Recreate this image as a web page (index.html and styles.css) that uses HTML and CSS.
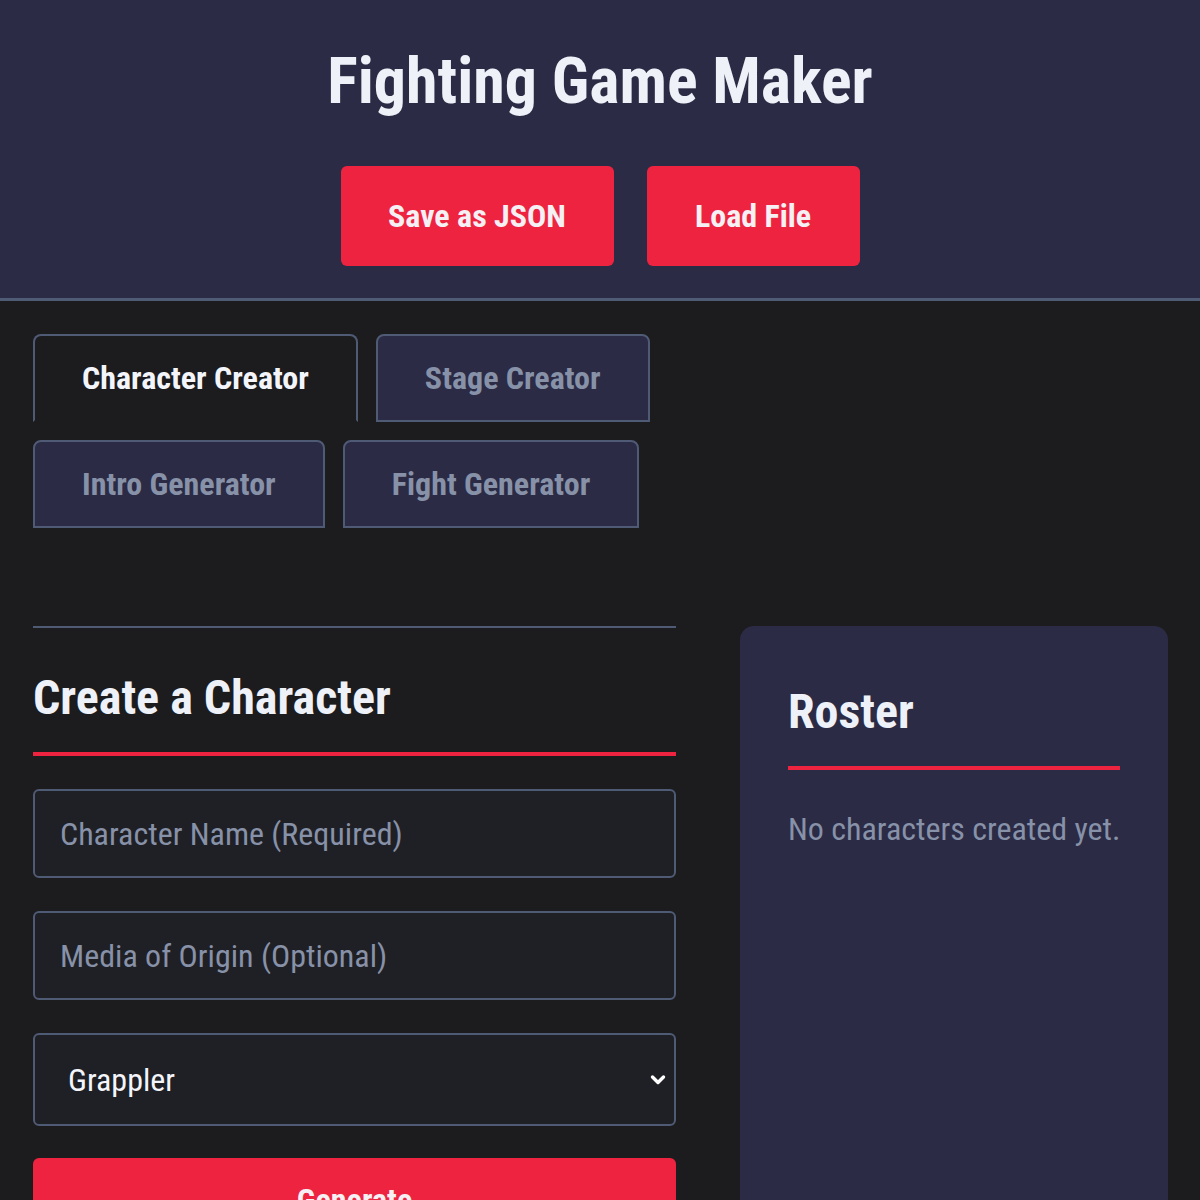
FILE: index.html
```html
<!DOCTYPE html>
<html lang="en">
<head>
    <meta charset="UTF-8">
    <meta name="viewport" content="width=device-width, initial-scale=1.0">
    <title>Fighting Game Maker</title>
    <link rel="stylesheet" href="styles.css">
</head>
<body>
    <header>
        <h1>Fighting Game Maker</h1>
        <div class="header-actions">
            <button class="btn">Save as JSON</button>
            <button class="btn btn-narrow">Load File</button>
        </div>
    </header>
    <main>
        <nav class="tabs">
            <button class="tab active">Character Creator</button>
            <button class="tab">Stage Creator</button>
            <button class="tab">Intro Generator</button>
            <button class="tab">Fight Generator</button>
        </nav>
        <div class="layout">
            <section class="creator">
                <h2>Create a Character</h2>
                <input type="text" class="field" placeholder="Character Name (Required)">
                <input type="text" class="field" placeholder="Media of Origin (Optional)">
                <div class="select-wrap">
                    <select class="field select">
                        <option>Grappler</option>
                        <option>Rushdown</option>
                        <option>Zoner</option>
                        <option>All-Rounder</option>
                    </select>
                    <svg class="chevron" viewBox="0 0 18 18" width="18" height="18">
                        <path d="M3.5 6 L9 11.5 L14.5 6" fill="none" stroke="#fff" stroke-width="3.4" stroke-linecap="round" stroke-linejoin="round"/>
                    </svg>
                </div>
                <button class="btn btn-block">Generate</button>
            </section>
            <aside class="roster">
                <h2>Roster</h2>
                <p class="empty">No characters created yet.</p>
            </aside>
        </div>
    </main>
</body>
</html>
```

FILE: styles.css
```css
body {
    font-family: 'Roboto Condensed', Roboto, sans-serif;
    font-stretch: 75%;
    margin: 0;
    padding: 0;
    background: #1c1c1f;
    color: #eef1f7;
}

header {
    background: #2b2b45;
    border-bottom: 3px solid #4f5b75;
    text-align: center;
    padding: 46px 0 32px;
}

header h1 {
    margin: 0;
    font-size: 64px;
    font-weight: 700;
    line-height: 72px;
}

.header-actions {
    display: flex;
    justify-content: center;
    gap: 33px;
    margin-top: 48px;
}

.btn {
    font-family: inherit;
    font-stretch: 75%;
    background: #ee2340;
    color: #f5f0f3;
    border: none;
    border-radius: 6px;
    font-size: 32px;
    font-weight: 700;
    width: 273px;
    height: 100px;
    cursor: pointer;
}

.btn-narrow {
    width: 213px;
}

main {
    padding: 33px 32px 0 33px;
}

.tabs {
    display: flex;
    flex-wrap: wrap;
    gap: 18px;
    width: 643px;
}

.tab {
    font-family: inherit;
    font-stretch: 75%;
    font-size: 32px;
    font-weight: 700;
    height: 88px;
    padding: 0 47px;
    background: #2b2b45;
    color: #8791a8;
    border: 2px solid #4f5b75;
    border-radius: 8px 8px 0 0;
    cursor: pointer;
}

.tab.active {
    background: #1c1c1f;
    color: #f3f5fa;
    border-bottom-color: transparent;
}

.layout {
    display: grid;
    grid-template-columns: 643px 428px;
    gap: 64px;
    margin-top: 98px;
}

.creator {
    border-top: 2px solid #4f5b75;
    padding-top: 40px;
}

.creator h2,
.roster h2 {
    margin: 0 0 33px;
    font-size: 48px;
    font-weight: 700;
    line-height: 60px;
    padding-bottom: 24px;
    border-bottom: 4px solid #ee2340;
}

.field {
    display: block;
    box-sizing: border-box;
    width: 100%;
    height: 89px;
    margin-top: 33px;
    padding: 0 25px;
    background: #1f2025;
    border: 2px solid #4f5b75;
    border-radius: 6px;
    color: #f3f5fa;
    font-family: inherit;
    font-stretch: 75%;
    font-size: 32px;
}

.creator h2 + .field {
    margin-top: 0;
}

.field::placeholder {
    color: #8791a8;
}

.select-wrap {
    position: relative;
}

.select {
    appearance: none;
    height: 93px;
    padding: 0 33px;
}

.chevron {
    position: absolute;
    right: 9px;
    top: 50%;
    transform: translateY(-50%);
    pointer-events: none;
}

.btn-block {
    width: 100%;
    margin-top: 32px;
    height: 84px;
}

.roster {
    background: #2b2b45;
    border-radius: 14px;
    padding: 56px 48px 400px;
}

.roster h2 {
    margin-bottom: 40px;
}

.empty {
    margin: 0;
    font-size: 32px;
    white-space: nowrap;
    color: #8791a8;
}
```
